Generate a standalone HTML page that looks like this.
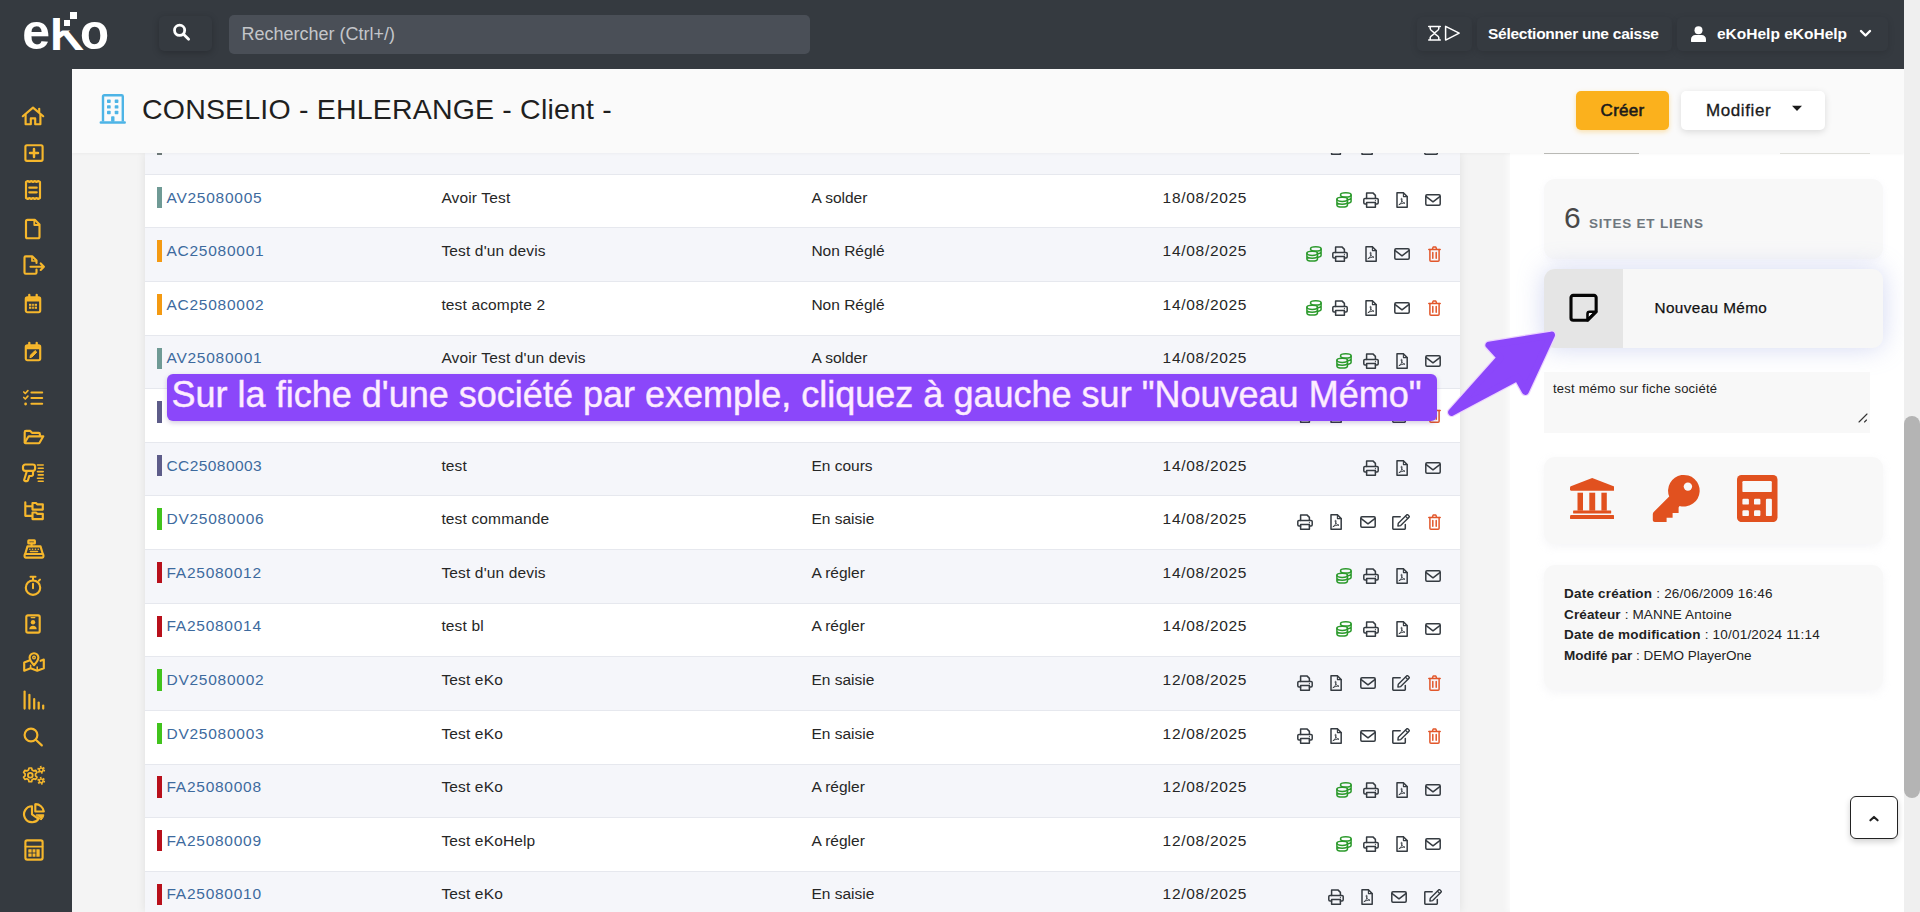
<!DOCTYPE html>
<html lang="fr">
<head>
<meta charset="utf-8">
<title>eKo - CONSELIO - EHLERANGE - Client</title>
<style>
*{box-sizing:border-box;margin:0;padding:0}
html,body{width:1920px;height:912px;overflow:hidden;background:#f4f4f4;font-family:"Liberation Sans",sans-serif;color:#222}
.abs{position:absolute}
#stage{position:relative;width:1920px;height:912px;overflow:hidden}
/* top bar */
#topbar{position:absolute;left:0;top:0;width:1904px;height:69px;background:#353a40}
#sidebar{position:absolute;left:0;top:69px;width:72px;height:843px;background:#353a40}
#sidebar svg{position:absolute;left:21px;width:24px;height:24px;fill:none;stroke:#f6b72c;stroke-width:2.15;stroke-linecap:round;stroke-linejoin:round}
.tbtn{position:absolute;top:17px;height:34px;border-radius:5px;background:#353a40;box-shadow:0 2px 7px rgba(0,0,0,.13)}
#searchbtn{position:absolute;left:159px;top:15.5px;width:53px;height:35px;border-radius:5px;background:#353a40;box-shadow:0 2px 7px rgba(0,0,0,.22)}
#searchbox{position:absolute;left:229px;top:15px;width:581px;height:39px;border-radius:5px;background:#4a4f57;color:#c4c6ca;font-size:18px;line-height:38px;padding-left:12.4px;white-space:nowrap}
.tw{color:#fff;font-weight:bold;font-size:15.5px;white-space:nowrap;position:absolute;line-height:20px}
/* title bar */
#titlebar{position:absolute;left:72px;top:69px;width:1832px;height:84px;background:#fafafa;box-shadow:0 1px 3px rgba(0,0,0,.04)}
#title{position:absolute;left:142px;top:89.8px;font-size:28.5px;line-height:38px;color:#1f1f1f;white-space:nowrap;letter-spacing:.19px}
.btn{position:absolute;top:91px;height:39px;border-radius:5px;font-size:17px;line-height:39px;white-space:nowrap;color:#1a1a1a}
#creer{left:1576px;width:93px;background:#fbb11d;box-shadow:0 2px 5px rgba(251,177,29,.35);text-align:center;-webkit-text-stroke:.6px #1a1a1a;letter-spacing:.25px}
#modifier{left:1681px;width:144px;background:#fff;box-shadow:0 2px 7px rgba(0,0,0,.13);padding-left:25px;letter-spacing:.6px;-webkit-text-stroke:.3px #1a1a1a}
/* table */
#tablecard{position:absolute;left:145px;top:153px;width:1315px;height:759px;background:#fff;box-shadow:0 0 9px rgba(0,0,0,.085)}
.row{position:absolute;left:0;width:1315px;height:53.56px;box-shadow:inset 0 1px 0 #e6e8ee;font-size:15.5px;line-height:24px;white-space:nowrap;letter-spacing:.15px;color:#262626}
.row.alt{background:#f5f6fa}
.row .bar{position:absolute;left:12px;width:5px;height:21.4px}
.row .c1{position:absolute;left:21.5px;top:12px;color:#3d6a9e;letter-spacing:.74px}
.row .c2{position:absolute;left:296.4px;top:12px}
.row .c3{position:absolute;left:666.4px;top:12px;letter-spacing:0}
.row .c4{position:absolute;left:1017.6px;top:12px;letter-spacing:.7px}
.row svg{position:absolute;top:17px;width:18px;height:18px}
/* right panel */
#rpanel{position:absolute;left:1510px;top:153px;width:394px;height:759px;background:#fff;box-shadow:-3px 0 6px rgba(255,255,255,.7)}
.card{position:absolute;left:1544px;width:338.5px;border-radius:11px;background:#f8f8f8}
/* banner */
#banner{position:absolute;left:167px;top:374px;width:1270px;height:47px;border-radius:6px;background:#8b47fa;color:#fdeeff;font-size:36px;line-height:41px;padding-left:4.5px;letter-spacing:.012px;white-space:nowrap;box-shadow:0 2px 5px rgba(60,20,120,.22);-webkit-text-stroke:.45px #fbe4ff}
/* scrollbar */
#sbtrack{position:absolute;left:1904px;top:0;width:16px;height:912px;background:#efefef}
#sbthumb{position:absolute;left:1904px;top:416px;width:16px;height:382px;border-radius:8px;background:#b4b4b4}
#totop{position:absolute;left:1850px;top:796px;width:48px;height:43px;border:1px solid #222;border-radius:6px;background:#fff;box-shadow:0 3px 6px rgba(0,0,0,.18)}
</style>
</head>
<body>
<div id="stage">

<!-- CONTENT: table -->
<div id="tablecard">
<div class="row alt" style="top:-33px;height:54px"><span class="bar" style="top:13.2px;background:#6e7a79"></span><svg class="ri" viewBox="0 0 16 16" style="left:1183.2px;top:18.7px;width:16px;height:16px" fill="none" stroke="#353b41" stroke-width="1.5" stroke-linecap="round" stroke-linejoin="round"><path d="M3.6 6.4V.9h6.3l2.5 2.5v3"/><path d="M3.6 12H2a1.2 1.2 0 0 1-1.2-1.2V7.6a1.2 1.2 0 0 1 1.2-1.2h12a1.2 1.2 0 0 1 1.2 1.2v3.2a1.2 1.2 0 0 1-1.2 1.2h-1.6"/><rect x="3.6" y="10.4" width="8.8" height="4.8"/><circle cx="12.4" cy="8.7" r=".6" fill="#353b41" stroke="none"/></svg><svg class="ri" viewBox="0 0 12.2 16" style="left:1216.3px;top:18.7px;width:12.2px;height:16px" fill="none" stroke="#353b41" stroke-width="1.5" stroke-linecap="round" stroke-linejoin="round"><path d="M1 .8h6.4l3.8 3.8v10.6H1z"/><path d="M7.4 .8v3.8h3.8" stroke-width="1.1"/><path d="M3.2 12.6c1.8-.8 3.1-3.4 2.8-5.8-.1-.8-1-.7-.9.2.3 2.1 1.8 3.7 3.9 4.2-2.1-.2-4.2.4-5.8 1.4z" stroke-width=".9"/></svg><svg class="ri" viewBox="0 0 16 12" style="left:1245.5px;top:20.7px;width:16px;height:12px" fill="none" stroke="#353b41" stroke-width="1.5" stroke-linecap="round" stroke-linejoin="round"><rect x=".8" y=".8" width="14.4" height="10.4" rx="1.2"/><path d="M1.2 2.6l6.8 5.2 6.8-5.2"/></svg><svg class="ri" viewBox="0 0 18 16" style="left:1278.5px;top:18.7px;width:18px;height:16px" fill="none" stroke="#353b41" stroke-width="1.5" stroke-linecap="round" stroke-linejoin="round"><path d="M13.3 10.4v4.2a.6.6 0 0 1-.6.6H1.4a.6.6 0 0 1-.6-.6V3.3a.6.6 0 0 1 .6-.6h6.8"/><path d="M6.3 9.2l8.3-8.3a1 1 0 0 1 1.4 0l1 1a1 1 0 0 1 0 1.4l-8.3 8.3-2.8.4z" stroke-width="1.4"/><path d="M13.4 2.2l2.3 2.3" stroke-width="1.2"/></svg></div>
<div class="row" style="top:21px;height:53px"><span class="bar" style="top:12.8px;background:#6f9a95"></span><span class="c1" style="top:12px">AV25080005</span><span class="c2" style="top:12px">Avoir Test</span><span class="c3" style="top:12px">A solder</span><span class="c4" style="top:12px">18/08/2025</span><svg class="ri" viewBox="0 0 16 16" style="left:1191.2px;top:18.3px;width:16px;height:16px" fill="none" stroke="#2c9a2c" stroke-width="1.5" stroke-linecap="round" stroke-linejoin="round"><ellipse cx="9.8" cy="2.9" rx="5.3" ry="2.1"/><path d="M15.1 2.9v6.4c0 .9-1.2 1.6-2.9 1.9M15.1 5.8c0 .9-1.3 1.7-3 2"/><ellipse cx="6.2" cy="7.3" rx="5.3" ry="2.1"/><path d="M.9 7.3v5.7c0 1.2 2.4 2.1 5.3 2.1s5.3-.9 5.3-2.1V7.3M.9 10.1c0 1.2 2.4 2.1 5.3 2.1s5.3-.9 5.3-2.1"/></svg><svg class="ri" viewBox="0 0 16 16" style="left:1218.4px;top:18.3px;width:16px;height:16px" fill="none" stroke="#353b41" stroke-width="1.5" stroke-linecap="round" stroke-linejoin="round"><path d="M3.6 6.4V.9h6.3l2.5 2.5v3"/><path d="M3.6 12H2a1.2 1.2 0 0 1-1.2-1.2V7.6a1.2 1.2 0 0 1 1.2-1.2h12a1.2 1.2 0 0 1 1.2 1.2v3.2a1.2 1.2 0 0 1-1.2 1.2h-1.6"/><rect x="3.6" y="10.4" width="8.8" height="4.8"/><circle cx="12.4" cy="8.7" r=".6" fill="#353b41" stroke="none"/></svg><svg class="ri" viewBox="0 0 12.2 16" style="left:1251.1px;top:18.3px;width:12.2px;height:16px" fill="none" stroke="#353b41" stroke-width="1.5" stroke-linecap="round" stroke-linejoin="round"><path d="M1 .8h6.4l3.8 3.8v10.6H1z"/><path d="M7.4 .8v3.8h3.8" stroke-width="1.1"/><path d="M3.2 12.6c1.8-.8 3.1-3.4 2.8-5.8-.1-.8-1-.7-.9.2.3 2.1 1.8 3.7 3.9 4.2-2.1-.2-4.2.4-5.8 1.4z" stroke-width=".9"/></svg><svg class="ri" viewBox="0 0 16 12" style="left:1280.3px;top:20.3px;width:16px;height:12px" fill="none" stroke="#353b41" stroke-width="1.5" stroke-linecap="round" stroke-linejoin="round"><rect x=".8" y=".8" width="14.4" height="10.4" rx="1.2"/><path d="M1.2 2.6l6.8 5.2 6.8-5.2"/></svg></div>
<div class="row alt" style="top:74px;height:54px"><span class="bar" style="top:13.4px;background:#f49a12"></span><span class="c1" style="top:12px">AC25080001</span><span class="c2" style="top:12px">Test d'un devis</span><span class="c3" style="top:12px">Non Réglé</span><span class="c4" style="top:12px">14/08/2025</span><svg class="ri" viewBox="0 0 16 16" style="left:1160.8px;top:18.9px;width:16px;height:16px" fill="none" stroke="#2c9a2c" stroke-width="1.5" stroke-linecap="round" stroke-linejoin="round"><ellipse cx="9.8" cy="2.9" rx="5.3" ry="2.1"/><path d="M15.1 2.9v6.4c0 .9-1.2 1.6-2.9 1.9M15.1 5.8c0 .9-1.3 1.7-3 2"/><ellipse cx="6.2" cy="7.3" rx="5.3" ry="2.1"/><path d="M.9 7.3v5.7c0 1.2 2.4 2.1 5.3 2.1s5.3-.9 5.3-2.1V7.3M.9 10.1c0 1.2 2.4 2.1 5.3 2.1s5.3-.9 5.3-2.1"/></svg><svg class="ri" viewBox="0 0 16 16" style="left:1187.4px;top:18.9px;width:16px;height:16px" fill="none" stroke="#353b41" stroke-width="1.5" stroke-linecap="round" stroke-linejoin="round"><path d="M3.6 6.4V.9h6.3l2.5 2.5v3"/><path d="M3.6 12H2a1.2 1.2 0 0 1-1.2-1.2V7.6a1.2 1.2 0 0 1 1.2-1.2h12a1.2 1.2 0 0 1 1.2 1.2v3.2a1.2 1.2 0 0 1-1.2 1.2h-1.6"/><rect x="3.6" y="10.4" width="8.8" height="4.8"/><circle cx="12.4" cy="8.7" r=".6" fill="#353b41" stroke="none"/></svg><svg class="ri" viewBox="0 0 12.2 16" style="left:1220.1px;top:18.9px;width:12.2px;height:16px" fill="none" stroke="#353b41" stroke-width="1.5" stroke-linecap="round" stroke-linejoin="round"><path d="M1 .8h6.4l3.8 3.8v10.6H1z"/><path d="M7.4 .8v3.8h3.8" stroke-width="1.1"/><path d="M3.2 12.6c1.8-.8 3.1-3.4 2.8-5.8-.1-.8-1-.7-.9.2.3 2.1 1.8 3.7 3.9 4.2-2.1-.2-4.2.4-5.8 1.4z" stroke-width=".9"/></svg><svg class="ri" viewBox="0 0 16 12" style="left:1249.3px;top:20.9px;width:16px;height:12px" fill="none" stroke="#353b41" stroke-width="1.5" stroke-linecap="round" stroke-linejoin="round"><rect x=".8" y=".8" width="14.4" height="10.4" rx="1.2"/><path d="M1.2 2.6l6.8 5.2 6.8-5.2"/></svg><svg class="ri" viewBox="0 0 13 16" style="left:1282.9px;top:18.9px;width:13px;height:16px" fill="none" stroke="#e2572b" stroke-width="1.5" stroke-linecap="round" stroke-linejoin="round"><path d="M.8 3.4h11.4M4.3 3.2l.9-2.2h2.6l.9 2.2"/><path d="M1.9 3.6v10.6a1 1 0 0 0 1 1h7.2a1 1 0 0 0 1-1V3.6"/><path d="M4.8 6.4v5.8M8.2 6.4v5.8"/></svg></div>
<div class="row" style="top:128px;height:54px"><span class="bar" style="top:13px;background:#f49a12"></span><span class="c1" style="top:12px">AC25080002</span><span class="c2" style="top:12px">test acompte 2</span><span class="c3" style="top:12px">Non Réglé</span><span class="c4" style="top:12px">14/08/2025</span><svg class="ri" viewBox="0 0 16 16" style="left:1160.8px;top:18.5px;width:16px;height:16px" fill="none" stroke="#2c9a2c" stroke-width="1.5" stroke-linecap="round" stroke-linejoin="round"><ellipse cx="9.8" cy="2.9" rx="5.3" ry="2.1"/><path d="M15.1 2.9v6.4c0 .9-1.2 1.6-2.9 1.9M15.1 5.8c0 .9-1.3 1.7-3 2"/><ellipse cx="6.2" cy="7.3" rx="5.3" ry="2.1"/><path d="M.9 7.3v5.7c0 1.2 2.4 2.1 5.3 2.1s5.3-.9 5.3-2.1V7.3M.9 10.1c0 1.2 2.4 2.1 5.3 2.1s5.3-.9 5.3-2.1"/></svg><svg class="ri" viewBox="0 0 16 16" style="left:1187.4px;top:18.5px;width:16px;height:16px" fill="none" stroke="#353b41" stroke-width="1.5" stroke-linecap="round" stroke-linejoin="round"><path d="M3.6 6.4V.9h6.3l2.5 2.5v3"/><path d="M3.6 12H2a1.2 1.2 0 0 1-1.2-1.2V7.6a1.2 1.2 0 0 1 1.2-1.2h12a1.2 1.2 0 0 1 1.2 1.2v3.2a1.2 1.2 0 0 1-1.2 1.2h-1.6"/><rect x="3.6" y="10.4" width="8.8" height="4.8"/><circle cx="12.4" cy="8.7" r=".6" fill="#353b41" stroke="none"/></svg><svg class="ri" viewBox="0 0 12.2 16" style="left:1220.1px;top:18.5px;width:12.2px;height:16px" fill="none" stroke="#353b41" stroke-width="1.5" stroke-linecap="round" stroke-linejoin="round"><path d="M1 .8h6.4l3.8 3.8v10.6H1z"/><path d="M7.4 .8v3.8h3.8" stroke-width="1.1"/><path d="M3.2 12.6c1.8-.8 3.1-3.4 2.8-5.8-.1-.8-1-.7-.9.2.3 2.1 1.8 3.7 3.9 4.2-2.1-.2-4.2.4-5.8 1.4z" stroke-width=".9"/></svg><svg class="ri" viewBox="0 0 16 12" style="left:1249.3px;top:20.5px;width:16px;height:12px" fill="none" stroke="#353b41" stroke-width="1.5" stroke-linecap="round" stroke-linejoin="round"><rect x=".8" y=".8" width="14.4" height="10.4" rx="1.2"/><path d="M1.2 2.6l6.8 5.2 6.8-5.2"/></svg><svg class="ri" viewBox="0 0 13 16" style="left:1282.9px;top:18.5px;width:13px;height:16px" fill="none" stroke="#e2572b" stroke-width="1.5" stroke-linecap="round" stroke-linejoin="round"><path d="M.8 3.4h11.4M4.3 3.2l.9-2.2h2.6l.9 2.2"/><path d="M1.9 3.6v10.6a1 1 0 0 0 1 1h7.2a1 1 0 0 0 1-1V3.6"/><path d="M4.8 6.4v5.8M8.2 6.4v5.8"/></svg></div>
<div class="row alt" style="top:182px;height:53px"><span class="bar" style="top:12.6px;background:#6f9a95"></span><span class="c1" style="top:11px">AV25080001</span><span class="c2" style="top:11px">Avoir Test d'un devis</span><span class="c3" style="top:11px">A solder</span><span class="c4" style="top:11px">14/08/2025</span><svg class="ri" viewBox="0 0 16 16" style="left:1191.2px;top:18.1px;width:16px;height:16px" fill="none" stroke="#2c9a2c" stroke-width="1.5" stroke-linecap="round" stroke-linejoin="round"><ellipse cx="9.8" cy="2.9" rx="5.3" ry="2.1"/><path d="M15.1 2.9v6.4c0 .9-1.2 1.6-2.9 1.9M15.1 5.8c0 .9-1.3 1.7-3 2"/><ellipse cx="6.2" cy="7.3" rx="5.3" ry="2.1"/><path d="M.9 7.3v5.7c0 1.2 2.4 2.1 5.3 2.1s5.3-.9 5.3-2.1V7.3M.9 10.1c0 1.2 2.4 2.1 5.3 2.1s5.3-.9 5.3-2.1"/></svg><svg class="ri" viewBox="0 0 16 16" style="left:1218.4px;top:18.1px;width:16px;height:16px" fill="none" stroke="#353b41" stroke-width="1.5" stroke-linecap="round" stroke-linejoin="round"><path d="M3.6 6.4V.9h6.3l2.5 2.5v3"/><path d="M3.6 12H2a1.2 1.2 0 0 1-1.2-1.2V7.6a1.2 1.2 0 0 1 1.2-1.2h12a1.2 1.2 0 0 1 1.2 1.2v3.2a1.2 1.2 0 0 1-1.2 1.2h-1.6"/><rect x="3.6" y="10.4" width="8.8" height="4.8"/><circle cx="12.4" cy="8.7" r=".6" fill="#353b41" stroke="none"/></svg><svg class="ri" viewBox="0 0 12.2 16" style="left:1251.1px;top:18.1px;width:12.2px;height:16px" fill="none" stroke="#353b41" stroke-width="1.5" stroke-linecap="round" stroke-linejoin="round"><path d="M1 .8h6.4l3.8 3.8v10.6H1z"/><path d="M7.4 .8v3.8h3.8" stroke-width="1.1"/><path d="M3.2 12.6c1.8-.8 3.1-3.4 2.8-5.8-.1-.8-1-.7-.9.2.3 2.1 1.8 3.7 3.9 4.2-2.1-.2-4.2.4-5.8 1.4z" stroke-width=".9"/></svg><svg class="ri" viewBox="0 0 16 12" style="left:1280.3px;top:20.1px;width:16px;height:12px" fill="none" stroke="#353b41" stroke-width="1.5" stroke-linecap="round" stroke-linejoin="round"><rect x=".8" y=".8" width="14.4" height="10.4" rx="1.2"/><path d="M1.2 2.6l6.8 5.2 6.8-5.2"/></svg></div>
<div class="row" style="top:235px;height:54px"><span class="bar" style="top:13.2px;background:#5d5c89"></span><span class="c1" style="top:12px;letter-spacing:.42px">CC25080004</span><span class="c2" style="top:12px">test</span><span class="c3" style="top:12px">En cours</span><span class="c4" style="top:12px">14/08/2025</span><svg class="ri" viewBox="0 0 16 16" style="left:1152.2px;top:18.7px;width:16px;height:16px" fill="none" stroke="#353b41" stroke-width="1.5" stroke-linecap="round" stroke-linejoin="round"><path d="M3.6 6.4V.9h6.3l2.5 2.5v3"/><path d="M3.6 12H2a1.2 1.2 0 0 1-1.2-1.2V7.6a1.2 1.2 0 0 1 1.2-1.2h12a1.2 1.2 0 0 1 1.2 1.2v3.2a1.2 1.2 0 0 1-1.2 1.2h-1.6"/><rect x="3.6" y="10.4" width="8.8" height="4.8"/><circle cx="12.4" cy="8.7" r=".6" fill="#353b41" stroke="none"/></svg><svg class="ri" viewBox="0 0 12.2 16" style="left:1185.3px;top:18.7px;width:12.2px;height:16px" fill="none" stroke="#353b41" stroke-width="1.5" stroke-linecap="round" stroke-linejoin="round"><path d="M1 .8h6.4l3.8 3.8v10.6H1z"/><path d="M7.4 .8v3.8h3.8" stroke-width="1.1"/><path d="M3.2 12.6c1.8-.8 3.1-3.4 2.8-5.8-.1-.8-1-.7-.9.2.3 2.1 1.8 3.7 3.9 4.2-2.1-.2-4.2.4-5.8 1.4z" stroke-width=".9"/></svg><svg class="ri" viewBox="0 0 16 12" style="left:1214.5px;top:20.7px;width:16px;height:12px" fill="none" stroke="#353b41" stroke-width="1.5" stroke-linecap="round" stroke-linejoin="round"><rect x=".8" y=".8" width="14.4" height="10.4" rx="1.2"/><path d="M1.2 2.6l6.8 5.2 6.8-5.2"/></svg><svg class="ri" viewBox="0 0 18 16" style="left:1247.4px;top:18.7px;width:18px;height:16px" fill="none" stroke="#353b41" stroke-width="1.5" stroke-linecap="round" stroke-linejoin="round"><path d="M13.3 10.4v4.2a.6.6 0 0 1-.6.6H1.4a.6.6 0 0 1-.6-.6V3.3a.6.6 0 0 1 .6-.6h6.8"/><path d="M6.3 9.2l8.3-8.3a1 1 0 0 1 1.4 0l1 1a1 1 0 0 1 0 1.4l-8.3 8.3-2.8.4z" stroke-width="1.4"/><path d="M13.4 2.2l2.3 2.3" stroke-width="1.2"/></svg><svg class="ri" viewBox="0 0 13 16" style="left:1282.9px;top:18.7px;width:13px;height:16px" fill="none" stroke="#e2572b" stroke-width="1.5" stroke-linecap="round" stroke-linejoin="round"><path d="M.8 3.4h11.4M4.3 3.2l.9-2.2h2.6l.9 2.2"/><path d="M1.9 3.6v10.6a1 1 0 0 0 1 1h7.2a1 1 0 0 0 1-1V3.6"/><path d="M4.8 6.4v5.8M8.2 6.4v5.8"/></svg></div>
<div class="row alt" style="top:289px;height:53px"><span class="bar" style="top:12.8px;background:#5d5c89"></span><span class="c1" style="top:12px;letter-spacing:.42px">CC25080003</span><span class="c2" style="top:12px">test</span><span class="c3" style="top:12px">En cours</span><span class="c4" style="top:12px">14/08/2025</span><svg class="ri" viewBox="0 0 16 16" style="left:1218.4px;top:18.3px;width:16px;height:16px" fill="none" stroke="#353b41" stroke-width="1.5" stroke-linecap="round" stroke-linejoin="round"><path d="M3.6 6.4V.9h6.3l2.5 2.5v3"/><path d="M3.6 12H2a1.2 1.2 0 0 1-1.2-1.2V7.6a1.2 1.2 0 0 1 1.2-1.2h12a1.2 1.2 0 0 1 1.2 1.2v3.2a1.2 1.2 0 0 1-1.2 1.2h-1.6"/><rect x="3.6" y="10.4" width="8.8" height="4.8"/><circle cx="12.4" cy="8.7" r=".6" fill="#353b41" stroke="none"/></svg><svg class="ri" viewBox="0 0 12.2 16" style="left:1251.1px;top:18.3px;width:12.2px;height:16px" fill="none" stroke="#353b41" stroke-width="1.5" stroke-linecap="round" stroke-linejoin="round"><path d="M1 .8h6.4l3.8 3.8v10.6H1z"/><path d="M7.4 .8v3.8h3.8" stroke-width="1.1"/><path d="M3.2 12.6c1.8-.8 3.1-3.4 2.8-5.8-.1-.8-1-.7-.9.2.3 2.1 1.8 3.7 3.9 4.2-2.1-.2-4.2.4-5.8 1.4z" stroke-width=".9"/></svg><svg class="ri" viewBox="0 0 16 12" style="left:1280.3px;top:20.3px;width:16px;height:12px" fill="none" stroke="#353b41" stroke-width="1.5" stroke-linecap="round" stroke-linejoin="round"><rect x=".8" y=".8" width="14.4" height="10.4" rx="1.2"/><path d="M1.2 2.6l6.8 5.2 6.8-5.2"/></svg></div>
<div class="row" style="top:342px;height:54px"><span class="bar" style="top:13.4px;background:#41c31d"></span><span class="c1" style="top:12px">DV25080006</span><span class="c2" style="top:12px">test commande</span><span class="c3" style="top:12px">En saisie</span><span class="c4" style="top:12px">14/08/2025</span><svg class="ri" viewBox="0 0 16 16" style="left:1152.2px;top:18.9px;width:16px;height:16px" fill="none" stroke="#353b41" stroke-width="1.5" stroke-linecap="round" stroke-linejoin="round"><path d="M3.6 6.4V.9h6.3l2.5 2.5v3"/><path d="M3.6 12H2a1.2 1.2 0 0 1-1.2-1.2V7.6a1.2 1.2 0 0 1 1.2-1.2h12a1.2 1.2 0 0 1 1.2 1.2v3.2a1.2 1.2 0 0 1-1.2 1.2h-1.6"/><rect x="3.6" y="10.4" width="8.8" height="4.8"/><circle cx="12.4" cy="8.7" r=".6" fill="#353b41" stroke="none"/></svg><svg class="ri" viewBox="0 0 12.2 16" style="left:1185.3px;top:18.9px;width:12.2px;height:16px" fill="none" stroke="#353b41" stroke-width="1.5" stroke-linecap="round" stroke-linejoin="round"><path d="M1 .8h6.4l3.8 3.8v10.6H1z"/><path d="M7.4 .8v3.8h3.8" stroke-width="1.1"/><path d="M3.2 12.6c1.8-.8 3.1-3.4 2.8-5.8-.1-.8-1-.7-.9.2.3 2.1 1.8 3.7 3.9 4.2-2.1-.2-4.2.4-5.8 1.4z" stroke-width=".9"/></svg><svg class="ri" viewBox="0 0 16 12" style="left:1214.5px;top:20.9px;width:16px;height:12px" fill="none" stroke="#353b41" stroke-width="1.5" stroke-linecap="round" stroke-linejoin="round"><rect x=".8" y=".8" width="14.4" height="10.4" rx="1.2"/><path d="M1.2 2.6l6.8 5.2 6.8-5.2"/></svg><svg class="ri" viewBox="0 0 18 16" style="left:1247.4px;top:18.9px;width:18px;height:16px" fill="none" stroke="#353b41" stroke-width="1.5" stroke-linecap="round" stroke-linejoin="round"><path d="M13.3 10.4v4.2a.6.6 0 0 1-.6.6H1.4a.6.6 0 0 1-.6-.6V3.3a.6.6 0 0 1 .6-.6h6.8"/><path d="M6.3 9.2l8.3-8.3a1 1 0 0 1 1.4 0l1 1a1 1 0 0 1 0 1.4l-8.3 8.3-2.8.4z" stroke-width="1.4"/><path d="M13.4 2.2l2.3 2.3" stroke-width="1.2"/></svg><svg class="ri" viewBox="0 0 13 16" style="left:1282.9px;top:18.9px;width:13px;height:16px" fill="none" stroke="#e2572b" stroke-width="1.5" stroke-linecap="round" stroke-linejoin="round"><path d="M.8 3.4h11.4M4.3 3.2l.9-2.2h2.6l.9 2.2"/><path d="M1.9 3.6v10.6a1 1 0 0 0 1 1h7.2a1 1 0 0 0 1-1V3.6"/><path d="M4.8 6.4v5.8M8.2 6.4v5.8"/></svg></div>
<div class="row alt" style="top:396px;height:54px"><span class="bar" style="top:13px;background:#b8101b"></span><span class="c1" style="top:12px">FA25080012</span><span class="c2" style="top:12px">Test d'un devis</span><span class="c3" style="top:12px">A régler</span><span class="c4" style="top:12px">14/08/2025</span><svg class="ri" viewBox="0 0 16 16" style="left:1191.2px;top:18.5px;width:16px;height:16px" fill="none" stroke="#2c9a2c" stroke-width="1.5" stroke-linecap="round" stroke-linejoin="round"><ellipse cx="9.8" cy="2.9" rx="5.3" ry="2.1"/><path d="M15.1 2.9v6.4c0 .9-1.2 1.6-2.9 1.9M15.1 5.8c0 .9-1.3 1.7-3 2"/><ellipse cx="6.2" cy="7.3" rx="5.3" ry="2.1"/><path d="M.9 7.3v5.7c0 1.2 2.4 2.1 5.3 2.1s5.3-.9 5.3-2.1V7.3M.9 10.1c0 1.2 2.4 2.1 5.3 2.1s5.3-.9 5.3-2.1"/></svg><svg class="ri" viewBox="0 0 16 16" style="left:1218.4px;top:18.5px;width:16px;height:16px" fill="none" stroke="#353b41" stroke-width="1.5" stroke-linecap="round" stroke-linejoin="round"><path d="M3.6 6.4V.9h6.3l2.5 2.5v3"/><path d="M3.6 12H2a1.2 1.2 0 0 1-1.2-1.2V7.6a1.2 1.2 0 0 1 1.2-1.2h12a1.2 1.2 0 0 1 1.2 1.2v3.2a1.2 1.2 0 0 1-1.2 1.2h-1.6"/><rect x="3.6" y="10.4" width="8.8" height="4.8"/><circle cx="12.4" cy="8.7" r=".6" fill="#353b41" stroke="none"/></svg><svg class="ri" viewBox="0 0 12.2 16" style="left:1251.1px;top:18.5px;width:12.2px;height:16px" fill="none" stroke="#353b41" stroke-width="1.5" stroke-linecap="round" stroke-linejoin="round"><path d="M1 .8h6.4l3.8 3.8v10.6H1z"/><path d="M7.4 .8v3.8h3.8" stroke-width="1.1"/><path d="M3.2 12.6c1.8-.8 3.1-3.4 2.8-5.8-.1-.8-1-.7-.9.2.3 2.1 1.8 3.7 3.9 4.2-2.1-.2-4.2.4-5.8 1.4z" stroke-width=".9"/></svg><svg class="ri" viewBox="0 0 16 12" style="left:1280.3px;top:20.5px;width:16px;height:12px" fill="none" stroke="#353b41" stroke-width="1.5" stroke-linecap="round" stroke-linejoin="round"><rect x=".8" y=".8" width="14.4" height="10.4" rx="1.2"/><path d="M1.2 2.6l6.8 5.2 6.8-5.2"/></svg></div>
<div class="row" style="top:450px;height:53px"><span class="bar" style="top:12.6px;background:#b8101b"></span><span class="c1" style="top:11px">FA25080014</span><span class="c2" style="top:11px">test bl</span><span class="c3" style="top:11px">A régler</span><span class="c4" style="top:11px">14/08/2025</span><svg class="ri" viewBox="0 0 16 16" style="left:1191.2px;top:18.1px;width:16px;height:16px" fill="none" stroke="#2c9a2c" stroke-width="1.5" stroke-linecap="round" stroke-linejoin="round"><ellipse cx="9.8" cy="2.9" rx="5.3" ry="2.1"/><path d="M15.1 2.9v6.4c0 .9-1.2 1.6-2.9 1.9M15.1 5.8c0 .9-1.3 1.7-3 2"/><ellipse cx="6.2" cy="7.3" rx="5.3" ry="2.1"/><path d="M.9 7.3v5.7c0 1.2 2.4 2.1 5.3 2.1s5.3-.9 5.3-2.1V7.3M.9 10.1c0 1.2 2.4 2.1 5.3 2.1s5.3-.9 5.3-2.1"/></svg><svg class="ri" viewBox="0 0 16 16" style="left:1218.4px;top:18.1px;width:16px;height:16px" fill="none" stroke="#353b41" stroke-width="1.5" stroke-linecap="round" stroke-linejoin="round"><path d="M3.6 6.4V.9h6.3l2.5 2.5v3"/><path d="M3.6 12H2a1.2 1.2 0 0 1-1.2-1.2V7.6a1.2 1.2 0 0 1 1.2-1.2h12a1.2 1.2 0 0 1 1.2 1.2v3.2a1.2 1.2 0 0 1-1.2 1.2h-1.6"/><rect x="3.6" y="10.4" width="8.8" height="4.8"/><circle cx="12.4" cy="8.7" r=".6" fill="#353b41" stroke="none"/></svg><svg class="ri" viewBox="0 0 12.2 16" style="left:1251.1px;top:18.1px;width:12.2px;height:16px" fill="none" stroke="#353b41" stroke-width="1.5" stroke-linecap="round" stroke-linejoin="round"><path d="M1 .8h6.4l3.8 3.8v10.6H1z"/><path d="M7.4 .8v3.8h3.8" stroke-width="1.1"/><path d="M3.2 12.6c1.8-.8 3.1-3.4 2.8-5.8-.1-.8-1-.7-.9.2.3 2.1 1.8 3.7 3.9 4.2-2.1-.2-4.2.4-5.8 1.4z" stroke-width=".9"/></svg><svg class="ri" viewBox="0 0 16 12" style="left:1280.3px;top:20.1px;width:16px;height:12px" fill="none" stroke="#353b41" stroke-width="1.5" stroke-linecap="round" stroke-linejoin="round"><rect x=".8" y=".8" width="14.4" height="10.4" rx="1.2"/><path d="M1.2 2.6l6.8 5.2 6.8-5.2"/></svg></div>
<div class="row alt" style="top:503px;height:54px"><span class="bar" style="top:13.2px;background:#41c31d"></span><span class="c1" style="top:12px">DV25080002</span><span class="c2" style="top:12px">Test eKo</span><span class="c3" style="top:12px">En saisie</span><span class="c4" style="top:12px">12/08/2025</span><svg class="ri" viewBox="0 0 16 16" style="left:1152.2px;top:18.7px;width:16px;height:16px" fill="none" stroke="#353b41" stroke-width="1.5" stroke-linecap="round" stroke-linejoin="round"><path d="M3.6 6.4V.9h6.3l2.5 2.5v3"/><path d="M3.6 12H2a1.2 1.2 0 0 1-1.2-1.2V7.6a1.2 1.2 0 0 1 1.2-1.2h12a1.2 1.2 0 0 1 1.2 1.2v3.2a1.2 1.2 0 0 1-1.2 1.2h-1.6"/><rect x="3.6" y="10.4" width="8.8" height="4.8"/><circle cx="12.4" cy="8.7" r=".6" fill="#353b41" stroke="none"/></svg><svg class="ri" viewBox="0 0 12.2 16" style="left:1185.3px;top:18.7px;width:12.2px;height:16px" fill="none" stroke="#353b41" stroke-width="1.5" stroke-linecap="round" stroke-linejoin="round"><path d="M1 .8h6.4l3.8 3.8v10.6H1z"/><path d="M7.4 .8v3.8h3.8" stroke-width="1.1"/><path d="M3.2 12.6c1.8-.8 3.1-3.4 2.8-5.8-.1-.8-1-.7-.9.2.3 2.1 1.8 3.7 3.9 4.2-2.1-.2-4.2.4-5.8 1.4z" stroke-width=".9"/></svg><svg class="ri" viewBox="0 0 16 12" style="left:1214.5px;top:20.7px;width:16px;height:12px" fill="none" stroke="#353b41" stroke-width="1.5" stroke-linecap="round" stroke-linejoin="round"><rect x=".8" y=".8" width="14.4" height="10.4" rx="1.2"/><path d="M1.2 2.6l6.8 5.2 6.8-5.2"/></svg><svg class="ri" viewBox="0 0 18 16" style="left:1247.4px;top:18.7px;width:18px;height:16px" fill="none" stroke="#353b41" stroke-width="1.5" stroke-linecap="round" stroke-linejoin="round"><path d="M13.3 10.4v4.2a.6.6 0 0 1-.6.6H1.4a.6.6 0 0 1-.6-.6V3.3a.6.6 0 0 1 .6-.6h6.8"/><path d="M6.3 9.2l8.3-8.3a1 1 0 0 1 1.4 0l1 1a1 1 0 0 1 0 1.4l-8.3 8.3-2.8.4z" stroke-width="1.4"/><path d="M13.4 2.2l2.3 2.3" stroke-width="1.2"/></svg><svg class="ri" viewBox="0 0 13 16" style="left:1282.9px;top:18.7px;width:13px;height:16px" fill="none" stroke="#e2572b" stroke-width="1.5" stroke-linecap="round" stroke-linejoin="round"><path d="M.8 3.4h11.4M4.3 3.2l.9-2.2h2.6l.9 2.2"/><path d="M1.9 3.6v10.6a1 1 0 0 0 1 1h7.2a1 1 0 0 0 1-1V3.6"/><path d="M4.8 6.4v5.8M8.2 6.4v5.8"/></svg></div>
<div class="row" style="top:557px;height:54px"><span class="bar" style="top:12.8px;background:#41c31d"></span><span class="c1" style="top:12px">DV25080003</span><span class="c2" style="top:12px">Test eKo</span><span class="c3" style="top:12px">En saisie</span><span class="c4" style="top:12px">12/08/2025</span><svg class="ri" viewBox="0 0 16 16" style="left:1152.2px;top:18.3px;width:16px;height:16px" fill="none" stroke="#353b41" stroke-width="1.5" stroke-linecap="round" stroke-linejoin="round"><path d="M3.6 6.4V.9h6.3l2.5 2.5v3"/><path d="M3.6 12H2a1.2 1.2 0 0 1-1.2-1.2V7.6a1.2 1.2 0 0 1 1.2-1.2h12a1.2 1.2 0 0 1 1.2 1.2v3.2a1.2 1.2 0 0 1-1.2 1.2h-1.6"/><rect x="3.6" y="10.4" width="8.8" height="4.8"/><circle cx="12.4" cy="8.7" r=".6" fill="#353b41" stroke="none"/></svg><svg class="ri" viewBox="0 0 12.2 16" style="left:1185.3px;top:18.3px;width:12.2px;height:16px" fill="none" stroke="#353b41" stroke-width="1.5" stroke-linecap="round" stroke-linejoin="round"><path d="M1 .8h6.4l3.8 3.8v10.6H1z"/><path d="M7.4 .8v3.8h3.8" stroke-width="1.1"/><path d="M3.2 12.6c1.8-.8 3.1-3.4 2.8-5.8-.1-.8-1-.7-.9.2.3 2.1 1.8 3.7 3.9 4.2-2.1-.2-4.2.4-5.8 1.4z" stroke-width=".9"/></svg><svg class="ri" viewBox="0 0 16 12" style="left:1214.5px;top:20.3px;width:16px;height:12px" fill="none" stroke="#353b41" stroke-width="1.5" stroke-linecap="round" stroke-linejoin="round"><rect x=".8" y=".8" width="14.4" height="10.4" rx="1.2"/><path d="M1.2 2.6l6.8 5.2 6.8-5.2"/></svg><svg class="ri" viewBox="0 0 18 16" style="left:1247.4px;top:18.3px;width:18px;height:16px" fill="none" stroke="#353b41" stroke-width="1.5" stroke-linecap="round" stroke-linejoin="round"><path d="M13.3 10.4v4.2a.6.6 0 0 1-.6.6H1.4a.6.6 0 0 1-.6-.6V3.3a.6.6 0 0 1 .6-.6h6.8"/><path d="M6.3 9.2l8.3-8.3a1 1 0 0 1 1.4 0l1 1a1 1 0 0 1 0 1.4l-8.3 8.3-2.8.4z" stroke-width="1.4"/><path d="M13.4 2.2l2.3 2.3" stroke-width="1.2"/></svg><svg class="ri" viewBox="0 0 13 16" style="left:1282.9px;top:18.3px;width:13px;height:16px" fill="none" stroke="#e2572b" stroke-width="1.5" stroke-linecap="round" stroke-linejoin="round"><path d="M.8 3.4h11.4M4.3 3.2l.9-2.2h2.6l.9 2.2"/><path d="M1.9 3.6v10.6a1 1 0 0 0 1 1h7.2a1 1 0 0 0 1-1V3.6"/><path d="M4.8 6.4v5.8M8.2 6.4v5.8"/></svg></div>
<div class="row alt" style="top:611px;height:53px"><span class="bar" style="top:12.4px;background:#b8101b"></span><span class="c1" style="top:11px">FA25080008</span><span class="c2" style="top:11px">Test eKo</span><span class="c3" style="top:11px">A régler</span><span class="c4" style="top:11px">12/08/2025</span><svg class="ri" viewBox="0 0 16 16" style="left:1191.2px;top:17.9px;width:16px;height:16px" fill="none" stroke="#2c9a2c" stroke-width="1.5" stroke-linecap="round" stroke-linejoin="round"><ellipse cx="9.8" cy="2.9" rx="5.3" ry="2.1"/><path d="M15.1 2.9v6.4c0 .9-1.2 1.6-2.9 1.9M15.1 5.8c0 .9-1.3 1.7-3 2"/><ellipse cx="6.2" cy="7.3" rx="5.3" ry="2.1"/><path d="M.9 7.3v5.7c0 1.2 2.4 2.1 5.3 2.1s5.3-.9 5.3-2.1V7.3M.9 10.1c0 1.2 2.4 2.1 5.3 2.1s5.3-.9 5.3-2.1"/></svg><svg class="ri" viewBox="0 0 16 16" style="left:1218.4px;top:17.9px;width:16px;height:16px" fill="none" stroke="#353b41" stroke-width="1.5" stroke-linecap="round" stroke-linejoin="round"><path d="M3.6 6.4V.9h6.3l2.5 2.5v3"/><path d="M3.6 12H2a1.2 1.2 0 0 1-1.2-1.2V7.6a1.2 1.2 0 0 1 1.2-1.2h12a1.2 1.2 0 0 1 1.2 1.2v3.2a1.2 1.2 0 0 1-1.2 1.2h-1.6"/><rect x="3.6" y="10.4" width="8.8" height="4.8"/><circle cx="12.4" cy="8.7" r=".6" fill="#353b41" stroke="none"/></svg><svg class="ri" viewBox="0 0 12.2 16" style="left:1251.1px;top:17.9px;width:12.2px;height:16px" fill="none" stroke="#353b41" stroke-width="1.5" stroke-linecap="round" stroke-linejoin="round"><path d="M1 .8h6.4l3.8 3.8v10.6H1z"/><path d="M7.4 .8v3.8h3.8" stroke-width="1.1"/><path d="M3.2 12.6c1.8-.8 3.1-3.4 2.8-5.8-.1-.8-1-.7-.9.2.3 2.1 1.8 3.7 3.9 4.2-2.1-.2-4.2.4-5.8 1.4z" stroke-width=".9"/></svg><svg class="ri" viewBox="0 0 16 12" style="left:1280.3px;top:19.9px;width:16px;height:12px" fill="none" stroke="#353b41" stroke-width="1.5" stroke-linecap="round" stroke-linejoin="round"><rect x=".8" y=".8" width="14.4" height="10.4" rx="1.2"/><path d="M1.2 2.6l6.8 5.2 6.8-5.2"/></svg></div>
<div class="row" style="top:664px;height:54px"><span class="bar" style="top:13px;background:#b8101b"></span><span class="c1" style="top:12px">FA25080009</span><span class="c2" style="top:12px">Test eKoHelp</span><span class="c3" style="top:12px">A régler</span><span class="c4" style="top:12px">12/08/2025</span><svg class="ri" viewBox="0 0 16 16" style="left:1191.2px;top:18.5px;width:16px;height:16px" fill="none" stroke="#2c9a2c" stroke-width="1.5" stroke-linecap="round" stroke-linejoin="round"><ellipse cx="9.8" cy="2.9" rx="5.3" ry="2.1"/><path d="M15.1 2.9v6.4c0 .9-1.2 1.6-2.9 1.9M15.1 5.8c0 .9-1.3 1.7-3 2"/><ellipse cx="6.2" cy="7.3" rx="5.3" ry="2.1"/><path d="M.9 7.3v5.7c0 1.2 2.4 2.1 5.3 2.1s5.3-.9 5.3-2.1V7.3M.9 10.1c0 1.2 2.4 2.1 5.3 2.1s5.3-.9 5.3-2.1"/></svg><svg class="ri" viewBox="0 0 16 16" style="left:1218.4px;top:18.5px;width:16px;height:16px" fill="none" stroke="#353b41" stroke-width="1.5" stroke-linecap="round" stroke-linejoin="round"><path d="M3.6 6.4V.9h6.3l2.5 2.5v3"/><path d="M3.6 12H2a1.2 1.2 0 0 1-1.2-1.2V7.6a1.2 1.2 0 0 1 1.2-1.2h12a1.2 1.2 0 0 1 1.2 1.2v3.2a1.2 1.2 0 0 1-1.2 1.2h-1.6"/><rect x="3.6" y="10.4" width="8.8" height="4.8"/><circle cx="12.4" cy="8.7" r=".6" fill="#353b41" stroke="none"/></svg><svg class="ri" viewBox="0 0 12.2 16" style="left:1251.1px;top:18.5px;width:12.2px;height:16px" fill="none" stroke="#353b41" stroke-width="1.5" stroke-linecap="round" stroke-linejoin="round"><path d="M1 .8h6.4l3.8 3.8v10.6H1z"/><path d="M7.4 .8v3.8h3.8" stroke-width="1.1"/><path d="M3.2 12.6c1.8-.8 3.1-3.4 2.8-5.8-.1-.8-1-.7-.9.2.3 2.1 1.8 3.7 3.9 4.2-2.1-.2-4.2.4-5.8 1.4z" stroke-width=".9"/></svg><svg class="ri" viewBox="0 0 16 12" style="left:1280.3px;top:20.5px;width:16px;height:12px" fill="none" stroke="#353b41" stroke-width="1.5" stroke-linecap="round" stroke-linejoin="round"><rect x=".8" y=".8" width="14.4" height="10.4" rx="1.2"/><path d="M1.2 2.6l6.8 5.2 6.8-5.2"/></svg></div>
<div class="row alt" style="top:718px;height:54px"><span class="bar" style="top:12.6px;background:#b8101b"></span><span class="c1" style="top:11px">FA25080010</span><span class="c2" style="top:11px">Test eKo</span><span class="c3" style="top:11px">En saisie</span><span class="c4" style="top:11px">12/08/2025</span><svg class="ri" viewBox="0 0 16 16" style="left:1183.2px;top:18.1px;width:16px;height:16px" fill="none" stroke="#353b41" stroke-width="1.5" stroke-linecap="round" stroke-linejoin="round"><path d="M3.6 6.4V.9h6.3l2.5 2.5v3"/><path d="M3.6 12H2a1.2 1.2 0 0 1-1.2-1.2V7.6a1.2 1.2 0 0 1 1.2-1.2h12a1.2 1.2 0 0 1 1.2 1.2v3.2a1.2 1.2 0 0 1-1.2 1.2h-1.6"/><rect x="3.6" y="10.4" width="8.8" height="4.8"/><circle cx="12.4" cy="8.7" r=".6" fill="#353b41" stroke="none"/></svg><svg class="ri" viewBox="0 0 12.2 16" style="left:1216.3px;top:18.1px;width:12.2px;height:16px" fill="none" stroke="#353b41" stroke-width="1.5" stroke-linecap="round" stroke-linejoin="round"><path d="M1 .8h6.4l3.8 3.8v10.6H1z"/><path d="M7.4 .8v3.8h3.8" stroke-width="1.1"/><path d="M3.2 12.6c1.8-.8 3.1-3.4 2.8-5.8-.1-.8-1-.7-.9.2.3 2.1 1.8 3.7 3.9 4.2-2.1-.2-4.2.4-5.8 1.4z" stroke-width=".9"/></svg><svg class="ri" viewBox="0 0 16 12" style="left:1245.5px;top:20.1px;width:16px;height:12px" fill="none" stroke="#353b41" stroke-width="1.5" stroke-linecap="round" stroke-linejoin="round"><rect x=".8" y=".8" width="14.4" height="10.4" rx="1.2"/><path d="M1.2 2.6l6.8 5.2 6.8-5.2"/></svg><svg class="ri" viewBox="0 0 18 16" style="left:1278.5px;top:18.1px;width:18px;height:16px" fill="none" stroke="#353b41" stroke-width="1.5" stroke-linecap="round" stroke-linejoin="round"><path d="M13.3 10.4v4.2a.6.6 0 0 1-.6.6H1.4a.6.6 0 0 1-.6-.6V3.3a.6.6 0 0 1 .6-.6h6.8"/><path d="M6.3 9.2l8.3-8.3a1 1 0 0 1 1.4 0l1 1a1 1 0 0 1 0 1.4l-8.3 8.3-2.8.4z" stroke-width="1.4"/><path d="M13.4 2.2l2.3 2.3" stroke-width="1.2"/></svg></div>
</div>

<!-- right panel -->
<div id="rpanel"></div>
<i class="abs" style="left:1544px;top:153px;width:95px;height:1px;background:#6f6f66;opacity:.45"></i>
<i class="abs" style="left:1780px;top:153px;width:90px;height:1px;background:#d8d8d2;opacity:.7"></i>
<!-- card 1 -->
<div class="card" style="top:179px;height:80px;box-shadow:0 2px 6px rgba(200,204,225,.15)"></div>
<div class="abs" id="six" style="left:1564px;top:200px;font-size:30px;line-height:36px;color:#484848">6</div>
<div class="abs" id="sites" style="left:1589px;top:214px;font-size:13.5px;line-height:20px;font-weight:bold;color:#6f777e;letter-spacing:.8px;white-space:nowrap">SITES ET LIENS</div>
<!-- card 2 -->
<div class="card" style="top:269px;height:79px;background:#f7f7f7;overflow:hidden;box-shadow:0 0 26px rgba(150,162,225,.42)"><i class="abs" style="left:0;top:0;width:78.5px;height:79px;background:#e5e5e5"></i></div>
<svg class="abs" style="left:1568px;top:293px;width:31px;height:30px" viewBox="0 0 31 30" fill="none" stroke="#050505" stroke-width="3.1" stroke-linejoin="round"><path d="M28.15 18.8H21.6a2.1 2.1 0 0 0-2.1 2.1v6.4z" fill="#fff" stroke-width="2.6"/><path d="M5.2 2.35h20.8a2.15 2.15 0 0 1 2.15 2.15v14.2l-8.7 8.6H5.2a2.2 2.2 0 0 1-2.2-2.2V4.55a2.2 2.2 0 0 1 2.2-2.2z"/></svg>
<div class="abs" id="nmemo" style="left:1654.5px;top:296px;font-size:15.3px;line-height:24px;color:#111;white-space:nowrap;letter-spacing:.4px;-webkit-text-stroke:.25px #111">Nouveau Mémo</div>
<!-- textarea -->
<div class="abs" style="left:1544px;top:372px;width:326px;height:61px;background:#f8f8f8"></div>
<div class="abs" id="memo" style="left:1553px;top:380px;font-size:13px;line-height:18px;color:#222;white-space:nowrap;letter-spacing:.22px">test mémo sur fiche société</div>
<svg class="abs" style="left:1856px;top:411px;width:12px;height:12px" viewBox="0 0 12 12" stroke="#333" stroke-width="1.1" stroke-linecap="round"><path d="M3 11l8-8M8.5 11l2-2"/></svg>
<!-- card 3 : icons -->
<div class="card" style="top:457px;height:87px;box-shadow:0 3px 8px rgba(200,200,210,.18)"></div>
<svg class="abs" style="left:1569.8px;top:477.6px;width:44.4px;height:41.4px" viewBox="0 0 44.4 41.4" fill="#e1511f"><path d="M22.2 0L.8 8.3c-.5.2-.8.6-.8 1.1v2.2c0 .6.5 1.1 1.1 1.1h42.2c.6 0 1.1-.5 1.1-1.1V9.4c0-.5-.3-.9-.8-1.1z"/><rect x="7.5" y="14.7" width="5.5" height="18"/><rect x="19.3" y="14.7" width="5.9" height="18"/><rect x="31.4" y="14.7" width="5.4" height="18"/><rect x="3.1" y="32.6" width="38.1" height="3" rx=".5"/><rect x="0" y="37.1" width="44.4" height="4.3" rx="1.3"/></svg>
<svg class="abs" style="left:1652px;top:474px;width:48px;height:48px" viewBox="0 0 48 48"><path d="M.8 40.2c0-.9.3-1.6.9-2.2L17.2 22.6A15.8 15.8 0 1 1 27.5 31.9l-.9 1.6v5.4h-6v4.8h-6v4.2H2.8c-1.1 0-2-.9-2-2z" fill="#e1511f"/><circle cx="35.9" cy="12.6" r="4.2" fill="#f8f8f8"/></svg>
<svg class="abs" style="left:1737.3px;top:474.8px;width:40.5px;height:47.1px" viewBox="0 0 40.5 47.1"><rect x="0" y="0" width="40.5" height="47.1" rx="4.5" fill="#e1511f"/><g fill="#f8f8f8"><rect x="5.4" y="6" width="29.4" height="11.1" rx="1.2"/><rect x="5.4" y="23.7" width="6.5" height="5.9" rx="1.2"/><rect x="17" y="23.7" width="6.4" height="5.9" rx="1.2"/><rect x="28.9" y="23.7" width="6" height="17.4" rx="1.2"/><rect x="5.4" y="35.2" width="6.5" height="5.9" rx="1.2"/><rect x="17" y="35.2" width="6.4" height="5.9" rx="1.2"/></g></svg>
<!-- card 4 : info -->
<div class="card" style="top:565px;height:124.5px;box-shadow:0 3px 8px rgba(200,200,210,.18)"></div>
<div class="abs info" style="left:1564px;top:584px;font-size:13.5px;line-height:20.7px;color:#222;white-space:nowrap">
<div id="i1" style="letter-spacing:.21px"><b>Date création</b> : 26/06/2009 16:46</div>
<div id="i2" style="letter-spacing:.15px"><b>Créateur</b> : MANNE Antoine</div>
<div id="i3" style="letter-spacing:.2px"><b>Date de modification</b> : 10/01/2024 11:14</div>
<div id="i4"><b>Modifé par</b> : DEMO PlayerOne</div>
</div>


<!-- title bar -->
<div id="titlebar"></div>
<svg class="abs" style="left:99px;top:93px;width:28px;height:32px" viewBox="0 0 28 32" fill="none" stroke="#4db4e6" stroke-width="2.4"><path d="M4 28.5V3.4a1.2 1.2 0 0 1 1.2-1.2h17.4a1.2 1.2 0 0 1 1.2 1.2v25.1"/><g fill="#4db4e6" stroke="none"><rect x=".6" y="28.2" width="26.3" height="2.5" rx="1"/><rect x="12.1" y="23.2" width="3.4" height="5.5" rx=".8"/><rect x="8" y="6.4" width="3.7" height="3.5" rx=".7"/><rect x="15.7" y="6.4" width="3.7" height="3.5" rx=".7"/><rect x="8" y="12.2" width="3.7" height="3.4" rx=".7"/><rect x="15.7" y="12.2" width="3.7" height="3.4" rx=".7"/><rect x="8" y="17.8" width="3.7" height="3.5" rx=".7"/><rect x="15.7" y="17.8" width="3.7" height="3.5" rx=".7"/></g></svg>
<div id="title">CONSELIO - EHLERANGE - Client -</div>
<div class="btn" id="creer">Créer</div>
<div class="btn" id="modifier">Modifier<svg class="abs" style="left:109.6px;top:14px;width:12px;height:7px" viewBox="0 0 12 7"><path d="M1 .8h10L6 6z" fill="#1a1a1a"/></svg></div>


<!-- top bar -->
<div id="topbar"></div>
<!-- logo -->
<div id="logo" class="abs" style="left:0;top:0;width:130px;height:69px;color:#fff;font-weight:bold">
<span class="abs" id="lg-e" style="left:22.3px;top:7.3px;font-size:50px;line-height:50px">e</span>
<span class="abs" id="lg-k" style="left:50px;top:9.5px;font-size:47px;line-height:47px;clip-path:polygon(0 0,10.2px 0,10.2px 21px,47px 21px,47px 47px,0 47px)">K</span>
<span class="abs" id="lg-o" style="left:80.2px;top:7.3px;font-size:50px;line-height:50px;transform-origin:0 0;transform:scaleX(.95)">o</span>
<i class="abs" style="left:63.6px;top:19.5px;width:6.6px;height:6.4px;background:#fff"></i>
<i class="abs" style="left:70.4px;top:12.3px;width:6.5px;height:6.6px;background:#fff"></i>
</div>
<div id="searchbtn"><svg class="abs" style="left:13.2px;top:7.3px;width:19px;height:19px" viewBox="0 0 19 19" fill="none" stroke="#fff" stroke-width="2.8" stroke-linecap="round"><circle cx="7.6" cy="7.3" r="5.1"/><path d="M11.8 11.5l4.8 4.8"/></svg></div>
<div id="searchbox">Rechercher (Ctrl+/)</div>
<div class="tbtn" style="left:1417px;width:55px"><svg class="abs" style="left:10px;top:6px;width:36px;height:22px" viewBox="0 0 36 22" fill="none" stroke="#fff" stroke-width="1.5" stroke-linejoin="round" stroke-linecap="round"><path d="M1.7 3.4h11.6M1.7 17h11.6M3.2 3.4v2.4c0 1.9 4.3 3.3 4.3 4.4s-4.3 2.5-4.3 4.4V17M11.8 3.4v2.4c0 1.9-4.3 3.3-4.3 4.4s4.3 2.5 4.3 4.4V17"/><path d="M18.6 3.3v13.8l13.6-6.9z"/></svg></div>
<div class="tbtn" style="left:1477px;width:195px"></div>
<div class="tw" style="left:1488px;top:24px;letter-spacing:-.26px" id="tw1">Sélectionner une caisse</div>
<div class="tbtn" style="left:1677px;width:211px"></div>
<svg class="abs" style="left:1691px;top:25.5px;width:15px;height:16px" viewBox="0 0 15 16" fill="#fff"><circle cx="7.5" cy="4.3" r="4"/><path d="M0 15.5v-2.3c0-2.3 2-4.2 4.4-4.2h6.2c2.4 0 4.4 1.9 4.4 4.2v2.3c0 .3-.2.5-.5.5H.5c-.3 0-.5-.2-.5-.5z"/></svg>
<div class="tw" style="left:1717px;top:24px" id="tw2">eKoHelp eKoHelp</div>
<svg class="abs" style="left:1859px;top:29px;width:13px;height:9px" viewBox="0 0 13 9" fill="none" stroke="#fff" stroke-width="2.4" stroke-linecap="round" stroke-linejoin="round"><path d="M2 2l4.5 4.5L11 2"/></svg>


<!-- sidebar -->
<div id="sidebar">
<svg viewBox="0 0 24 24" style="left:21.4px;top:34.5px"><path d="M1.8 12.2L12 3.6l10.2 8.6"/><path d="M4.6 10.6v9.6h5.2v-5.8h4.4v5.8h5.2v-9.6"/><path d="M18.2 4.8v3.2"/></svg>
<svg viewBox="0 0 24 24" style="left:21.5px;top:71.6px"><rect x="3.4" y="4.2" width="17.2" height="15.6" rx="1.5"/><path d="M12 8v8M8 12h8" stroke-width="2.5"/></svg>
<svg viewBox="0 0 24 24" style="left:21.4px;top:109.4px"><path d="M5 4l1.75-1 1.75 1 1.75-1 1.75 1 1.75-1 1.75 1 1.75-1L19 4v16l-1.75 1-1.75-1-1.75 1-1.75-1-1.75 1-1.75-1-1.75 1L5 20z"/><path d="M8.3 9.7h7.4M8.3 14.3h7.4" stroke-width="2.2"/></svg>
<svg viewBox="0 0 24 24" style="left:21.2px;top:147.6px"><path d="M6.5 2.8h7.3l4.7 4.7v12.2a1.5 1.5 0 0 1-1.5 1.5h-10.5a1.5 1.5 0 0 1-1.5-1.5v-15.4a1.5 1.5 0 0 1 1.5-1.5z"/><path d="M13.3 3.2v4.8h4.8" stroke-width="1.8"/></svg>
<svg viewBox="0 0 24 24" style="left:21.5px;top:184px"><path d="M14.5 16.5v3a1.2 1.2 0 0 1-1.2 1.2h-9.6a1.2 1.2 0 0 1-1.2-1.2v-15a1.2 1.2 0 0 1 1.2-1.2h6.5l4.3 4.3v2.4"/><path d="M10 3.8v4.2h4.2" stroke-width="1.7"/><path d="M8.5 13.7h13M18.7 10.5l3.2 3.2-3.2 3.2"/></svg>
<svg viewBox="0 0 24 24" style="left:21.4px;top:222.5px"><rect x="4.8" y="5.3" width="14.4" height="14.9" rx="1.6"/><path d="M8.3 2.8v3M15.7 2.8v3" stroke-width="2.3"/><path d="M4.8 6.2h14.4v2.8H4.8z" fill="#f6b72c" stroke-width="1.2"/><rect x="8" y="11.8" width="8" height="5" fill="#f6b72c" stroke="none"/><path d="M10.7 11.5v5.6M13.3 11.5v5.6M7.8 14.3h8.4" stroke="#353a40" stroke-width=".8"/></svg>
<svg viewBox="0 0 24 24" style="left:21.4px;top:270.5px"><rect x="4.8" y="5.3" width="14.4" height="14.9" rx="1.6"/><path d="M8.3 2.8v3M15.7 2.8v3" stroke-width="2.3"/><path d="M4.8 6.2h14.4v2.5H4.8z" fill="#f6b72c" stroke-width="1.2"/><path d="M9 17.3l.5-2.2 4.6-4.6 1.7 1.7-4.6 4.6z" fill="#f6b72c" stroke-width="1"/></svg>
<svg viewBox="0 0 24 24" style="left:21.3px;top:317.2px"><path d="M2.8 6l1.5 1.5 2.6-2.8M2.8 11.5l1.5 1.5 2.6-2.8" stroke-width="1.7"/><circle cx="4.6" cy="18" r="1.4" fill="#f6b72c" stroke="none"/><path d="M10.4 6.4h10.8M10.4 12h10.8M10.4 17.8h10.8" stroke-width="2"/></svg>
<svg viewBox="0 0 24 24" style="left:21.5px;top:355.6px"><path d="M2.7 17.2V7.2a1.3 1.3 0 0 1 1.3-1.3h4.3l2 2h6.3a1.3 1.3 0 0 1 1.3 1.3v1.6"/><path d="M2.8 17.8l3.3-5.8a1.3 1.3 0 0 1 1.1-.7h14.1l-3.6 6.2a1.3 1.3 0 0 1-1.1.7H3.5"/></svg>
<svg viewBox="0 0 24 24" style="left:21.4px;top:392.4px"><path d="M2 5.8a2.3 2.3 0 0 1 2.3-2.3h7.5a2.3 2.3 0 0 1 2.3 2.3v1.8a2.3 2.3 0 0 1-2.3 2.3H4.3A2.3 2.3 0 0 1 2 7.6z"/><path d="M5.8 10.2l-2.6 8.6a1 1 0 0 0 1 1.3h1.7a1 1 0 0 0 1-.7l1.3-4.4h2.3a1.5 1.5 0 0 0 1.5-1.5v-3.3"/><path d="M16.5 4h5.7M17.3 7.3h4.9M16.5 10.6h5.7M17.3 13.9h4.9M16.5 17.2h5.7M17.3 20.3h4.9" stroke-width="1.6"/></svg>
<svg viewBox="0 0 24 24" style="left:21.7px;top:429.8px"><path d="M3.3 3.2v13.6h6.4M3.3 7.2h6.4"/><path d="M10.5 4h3.5l1.2 1.3h5.6v5.3H10.5zM10.5 13.5h3.5l1.2 1.3h5.6v5.3H10.5z"/></svg>
<svg viewBox="0 0 24 24" style="left:21.7px;top:468.3px"><rect x="6.3" y="3.4" width="6.6" height="3" rx=".5"/><path d="M9.6 6.6v2.6"/><path d="M5.5 9.4h13l2.3 7.6H3.2z"/><rect x="2.6" y="17" width="18.8" height="3.6" rx="1"/><path d="M7.8 12.2h.1M10.5 12.2h.1M13.4 12.2h.1M16.2 12.2h.1M8.5 14.5h7" stroke-width="1.6"/></svg>
<svg viewBox="0 0 24 24" style="left:21.2px;top:505.4px"><circle cx="12" cy="13.7" r="7.2"/><path d="M12 9.8v4.4M9.5 2.8h5M12 3v3.3M17.8 6.8l1.2-1.2" stroke-width="2"/></svg>
<svg viewBox="0 0 24 24" style="left:21.3px;top:543.1px"><rect x="5.3" y="3.4" width="13.4" height="17.2" rx="1.6"/><circle cx="12" cy="10.3" r="2.2" fill="#f6b72c" stroke="none"/><path d="M8.3 17.3c0-2.3 1.5-3.6 3.7-3.6s3.7 1.3 3.7 3.6z" fill="#f6b72c" stroke="none"/><path d="M10.2 5.6h3.6" stroke-width="1.4"/></svg>
<svg viewBox="0 0 24 24" style="left:21.8px;top:580.8px"><path d="M7.3 10.5L2.2 12.5v8.2l6.4-2.4 6.6 2.4 6.6-2.4V9.6l-3.2 1.2"/><path d="M8.6 18.3v-3M15.2 20.5v-3.5" stroke-width="1.6"/><path d="M12 3.2a4.4 4.4 0 0 0-4.4 4.4c0 2.8 4.4 7.6 4.4 7.6s4.4-4.8 4.4-7.6A4.4 4.4 0 0 0 12 3.2z"/><circle cx="12" cy="7.6" r="1.3" stroke-width="1.4"/></svg>
<svg viewBox="0 0 24 24" style="left:21.5px;top:619px"><path d="M2.6 3.6v17" stroke-width="2.2"/><path d="M7.4 6.8v13.8" stroke-width="2.2"/><path d="M12.2 11v9.6" stroke-width="2.2"/><path d="M16.7 14.6v6" stroke-width="2.2"/><path d="M21.2 17.6v3" stroke-width="2.2"/></svg>
<svg viewBox="0 0 24 24" style="left:21.3px;top:656px"><circle cx="10" cy="10" r="6.4"/><path d="M14.8 14.8l6 5.6" stroke-width="2.2"/></svg>
<svg viewBox="0 0 24 24" style="left:21.5px;top:694px"><g transform="translate(8.3 12.2)"><circle r="2.4" stroke-width="1.8"/><path d="M-1.3-7.2h2.6l.5 2 1.6.9 2-.6 1.3 2.2-1.5 1.4v1.9l1.5 1.4-1.3 2.2-2-.6-1.6.9-.5 2h-2.6l-.5-2-1.6-.9-2 .6-1.3-2.2 1.5-1.4v-1.9l-1.5-1.4 1.3-2.2 2 .6 1.6-.9z" stroke-width="1.7"/></g><g stroke-width="1.7" stroke-linecap="butt"><circle cx="19.2" cy="6.8" r="3.1" stroke-dasharray="1.62 1.62"/><circle cx="19.2" cy="17.8" r="3.1" stroke-dasharray="1.62 1.62"/></g><circle cx="19.2" cy="6.8" r="1.9" stroke-width="1.5"/><circle cx="19.2" cy="17.8" r="1.9" stroke-width="1.5"/></svg>
<svg viewBox="0 0 24 24" style="left:21.8px;top:732.3px"><path d="M10 5.2a8 8 0 1 0 6.6 12.6L10 13.3z"/><path d="M13.3 3.2v7.3h8.5a8.3 8.3 0 0 0-8.5-7.3z"/><path d="M14.5 13.8h7.4a8.5 8.5 0 0 1-2.5 5z" fill="#f6b72c" stroke-width="1"/></svg>
<svg viewBox="0 0 24 24" style="left:21.5px;top:769.3px"><rect x="3.4" y="2.4" width="17.2" height="19.2" rx="1.8"/><path d="M3.6 8.6h16.8" stroke-width="1.8"/><rect x="6.3" y="11.2" width="11.4" height="7.6" rx=".6" fill="#f6b72c" stroke="none"/><path d="M10.1 11v8M13.9 11v8M6.2 15h7.6" stroke="#353a40" stroke-width=".9"/></svg>
</div>

<!-- banner + arrow -->
<div id="banner">Sur la fiche d'une société par exemple, cliquez à gauche sur "Nouveau Mémo"</div>
<svg class="abs" style="left:1436px;top:322px;width:130px;height:104px" viewBox="1436 322 130 104" stroke-linejoin="round"><path d="M1451.6 412.3L1500.4 357.6L1489 345.2L1551.5 335.1L1525.3 391.4L1517.5 377.3z" fill="#ecd2ff" stroke="#ecd2ff" stroke-width="9.4"/><path d="M1451.6 412.3L1500.4 357.6L1489 345.2L1551.5 335.1L1525.3 391.4L1517.5 377.3z" fill="#8b47fa" stroke="#8b47fa" stroke-width="7"/></svg>


<!-- scrollbar -->
<div id="sbtrack"></div>
<div id="sbthumb"></div>
<div id="totop"><svg class="abs" style="left:17.3px;top:16.6px;width:12px;height:9px" viewBox="0 0 12 9" fill="none" stroke="#222" stroke-width="2.1" stroke-linecap="round" stroke-linejoin="round"><path d="M2.4 6.3L6 2.9l3.6 3.4"/></svg></div>


</div>
</body>
</html>
